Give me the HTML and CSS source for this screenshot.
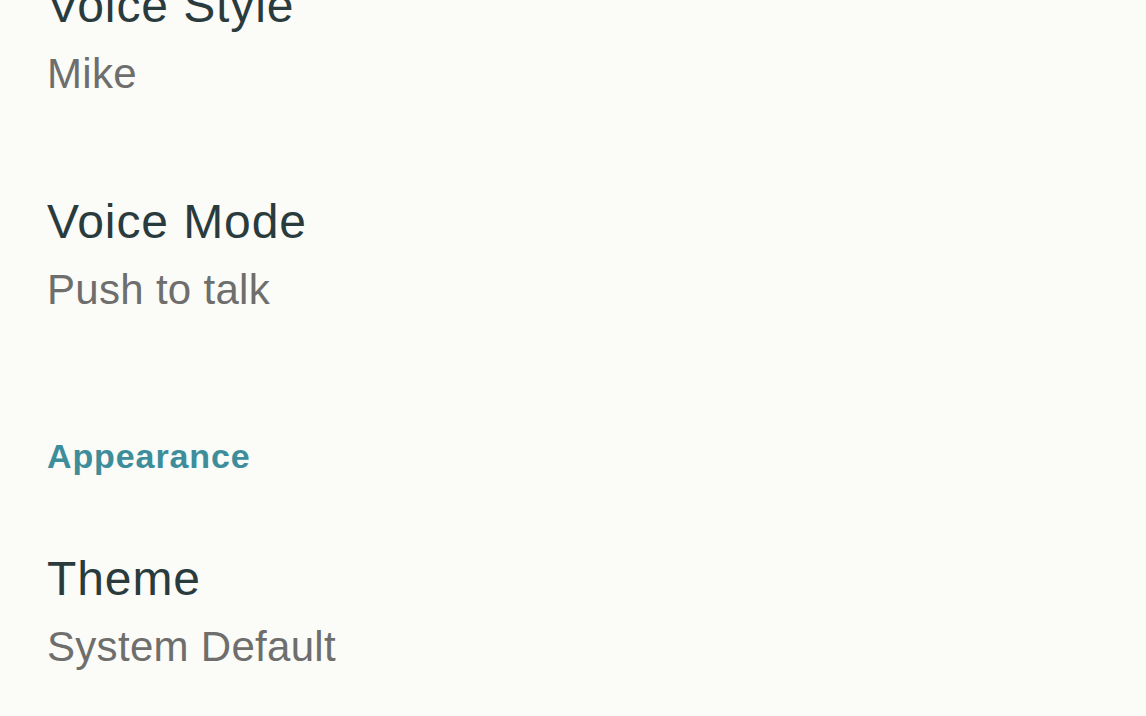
FILE: index.html
```html
<!DOCTYPE html>
<html lang="en">
<head>
<meta charset="utf-8">
<title>Settings</title>
<link rel="stylesheet" href="styles.css">
</head>
<body>
<main class="settings">
  <section class="group">
    <div class="item">
      <div class="item-title">Voice Style</div>
      <div class="item-value">Mike</div>
    </div>
    <div class="item">
      <div class="item-title">Voice Mode</div>
      <div class="item-value">Push to talk</div>
    </div>
  </section>
  <section class="group group-appearance">
    <h2 class="group-header">Appearance</h2>
    <div class="item">
      <div class="item-title">Theme</div>
      <div class="item-value">System Default</div>
    </div>
  </section>
</main>
</body>
</html>
```

FILE: styles.css
```css
html, body {
  margin: 0;
  padding: 0;
  background: #fbfbf8;
  height: 100%;
  overflow: hidden;
}

body {
  font-family: "Liberation Sans", Arial, sans-serif;
}

.settings {
  display: flex;
  flex-direction: column;
  margin-top: -22px;
  padding-left: 47px;
}

.group {
  display: flex;
  flex-direction: column;
  gap: 95px;
}

.group-appearance {
  margin-top: 121px;
  gap: 75px;
}

.group-header {
  margin: 0;
  font-size: 34px;
  line-height: 40px;
  font-weight: 700;
  letter-spacing: 0.9px;
  color: #3d8e9a;
}

.item {
  display: flex;
  flex-direction: column;
  gap: 15px;
}

.item-title {
  font-size: 48px;
  line-height: 56px;
  letter-spacing: 0.9px;
  color: #2a3b3d;
}

.item-value {
  font-size: 42px;
  line-height: 50px;
  letter-spacing: 0.3px;
  color: #6e6e6c;
}
```
